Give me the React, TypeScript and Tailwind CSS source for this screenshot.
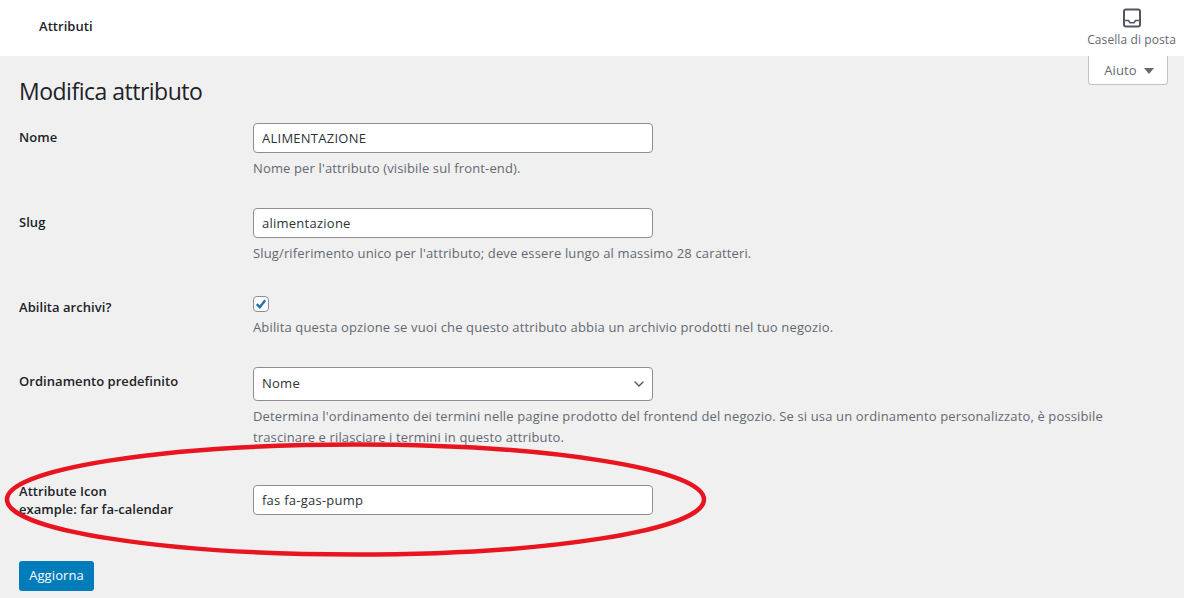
import { ChevronDown } from "lucide-react"

const font = { fontFamily: '"Open Sans", "Noto Sans", sans-serif' }

function Row({ label, children, className, labelClass }: { label: React.ReactNode; children: React.ReactNode; className?: string; labelClass?: string }) {
    return (
        <div className={"grid grid-cols-[234px_1fr] " + (className ?? "")}>
            <div className={"text-[13px] font-semibold tracking-[0.05px] text-[#1d2327] " + (labelClass ?? "pt-[4px] leading-[20px]")}>{label}</div>
            <div>{children}</div>
        </div>
    )
}

function Field({ value }: { value: string }) {
    return (
        <input
            readOnly
            value={value}
            className="block h-[30px] w-[400px] rounded-[4px] border border-[#8c8f94] bg-white px-2 text-[13px] tracking-[0.25px] text-[#2c3338]"
        />
    )
}

function Hint({ children }: { children: React.ReactNode }) {
    return <p className="text-[13px] leading-[21px] tracking-[0.14px] text-[#646970]">{children}</p>
}

export default function App() {
    return (
        <div className="relative h-[598px] w-[1184px] overflow-hidden bg-[#f0f0f1]" style={font}>
            <header className="flex h-14 items-start justify-between bg-white pl-[39px] pr-2">
                <h2 className="pt-[17px] text-[13px] leading-[18px] font-semibold tracking-[0.05px] text-[#1d2327]">Attributi</h2>
                <div className="flex flex-col items-center pt-[8px]">
                    <svg width="20" height="20" viewBox="0 0 20 20" fill="none" stroke="#50575e" strokeWidth="2">
                        <rect x="2" y="1.5" width="16" height="17" rx="2" />
                        <path d="M2 12.5h4.5l1.5 2.2h4l1.5-2.2H18" strokeWidth="1.6" />
                    </svg>
                    <span className="mt-[3px] text-[12px] leading-[18px] tracking-[0.1px] text-[#646970]">Casella di posta</span>
                </div>
            </header>

            <div className="absolute top-14 right-4 flex h-[29px] w-[80px] items-center justify-center gap-[7px] rounded-b-[4px] border border-t-0 border-[#c3c4c7] bg-white pt-[1px] pl-[2px] text-[13px] tracking-[0.1px] text-[#646970]">
                Aiuto
                <span className="h-0 w-0 border-x-[5px] border-t-[6px] border-x-transparent border-t-[#646970]" />
            </div>

            <main className="px-[19px] pt-[18px]">
                <h1 className="mb-[15px] text-[23px] leading-[34px] tracking-[-0.5px] text-[#1d2327]">Modifica attributo</h1>

                <Row label="Nome" className="mb-[29px]">
                    <Field value="ALIMENTAZIONE" />
                    <div className="mt-[5px]">
                        <Hint>Nome per l'attributo (visibile sul front-end).</Hint>
                    </div>
                </Row>

                <Row label="Slug" className="mb-[32px]">
                    <Field value="alimentazione" />
                    <div className="mt-[5px]">
                        <Hint>Slug/riferimento unico per l'attributo; deve essere lungo al massimo 28 caratteri.</Hint>
                    </div>
                </Row>

                <Row label="Abilita archivi?" className="mb-[29px] -mt-[5px]" labelClass="pt-[6px] leading-[20px]">
                    <div className="pt-[5px]">
                        <span className="flex h-4 w-4 items-center justify-center rounded-[4px] border border-[#8c8f94] bg-white">
                            <svg width="14" height="14" viewBox="0 0 14 14" fill="none" stroke="#2271b1" strokeWidth="2.4">
                                <path d="M2.8 7.2l3 3 5.4-7" />
                            </svg>
                        </span>
                    </div>
                    <div className="mt-[5px]">
                        <Hint>Abilita questa opzione se vuoi che questo attributo abbia un archivio prodotti nel tuo negozio.</Hint>
                    </div>
                </Row>

                <Row label="Ordinamento predefinito" className="mb-[37px]">
                    <div className="flex h-[34px] w-[400px] items-center justify-between rounded-[4px] border border-[#8c8f94] bg-white pr-[5px] pl-2 text-[13px] tracking-[0.25px] text-[#2c3338]">
                        Nome
                        <ChevronDown size={16} strokeWidth={2} color="#50575e" />
                    </div>
                    <div className="mt-[5px] w-[880px]">
                        <Hint>
                            Determina l'ordinamento dei termini nelle pagine prodotto del frontend del negozio. Se si usa un ordinamento personalizzato, è possibile trascinare e rilasciare i termini in questo attributo.
                        </Hint>
                    </div>
                </Row>

                <Row
                    labelClass="-mt-[3px] leading-[18px]"
                    label={
                        <>
                            Attribute Icon
                            <br />
                            example: far fa-calendar
                        </>
                    }
                >
                    <Field value="fas fa-gas-pump" />
                </Row>

                <button className="mt-[43px] h-[30px] w-[75px] rounded-[3px] bg-[#007cba] text-[13px] tracking-[0.1px] text-white">
                    Aggiorna
                </button>
            </main>

            <svg className="pointer-events-none absolute top-[440px] left-0" width="720" height="125" viewBox="0 440 720 125" fill="none">
                <ellipse cx="355.5" cy="499.5" rx="348.5" ry="55" stroke="#e8141f" strokeWidth="4.5" />
            </svg>
        </div>
    )
}
